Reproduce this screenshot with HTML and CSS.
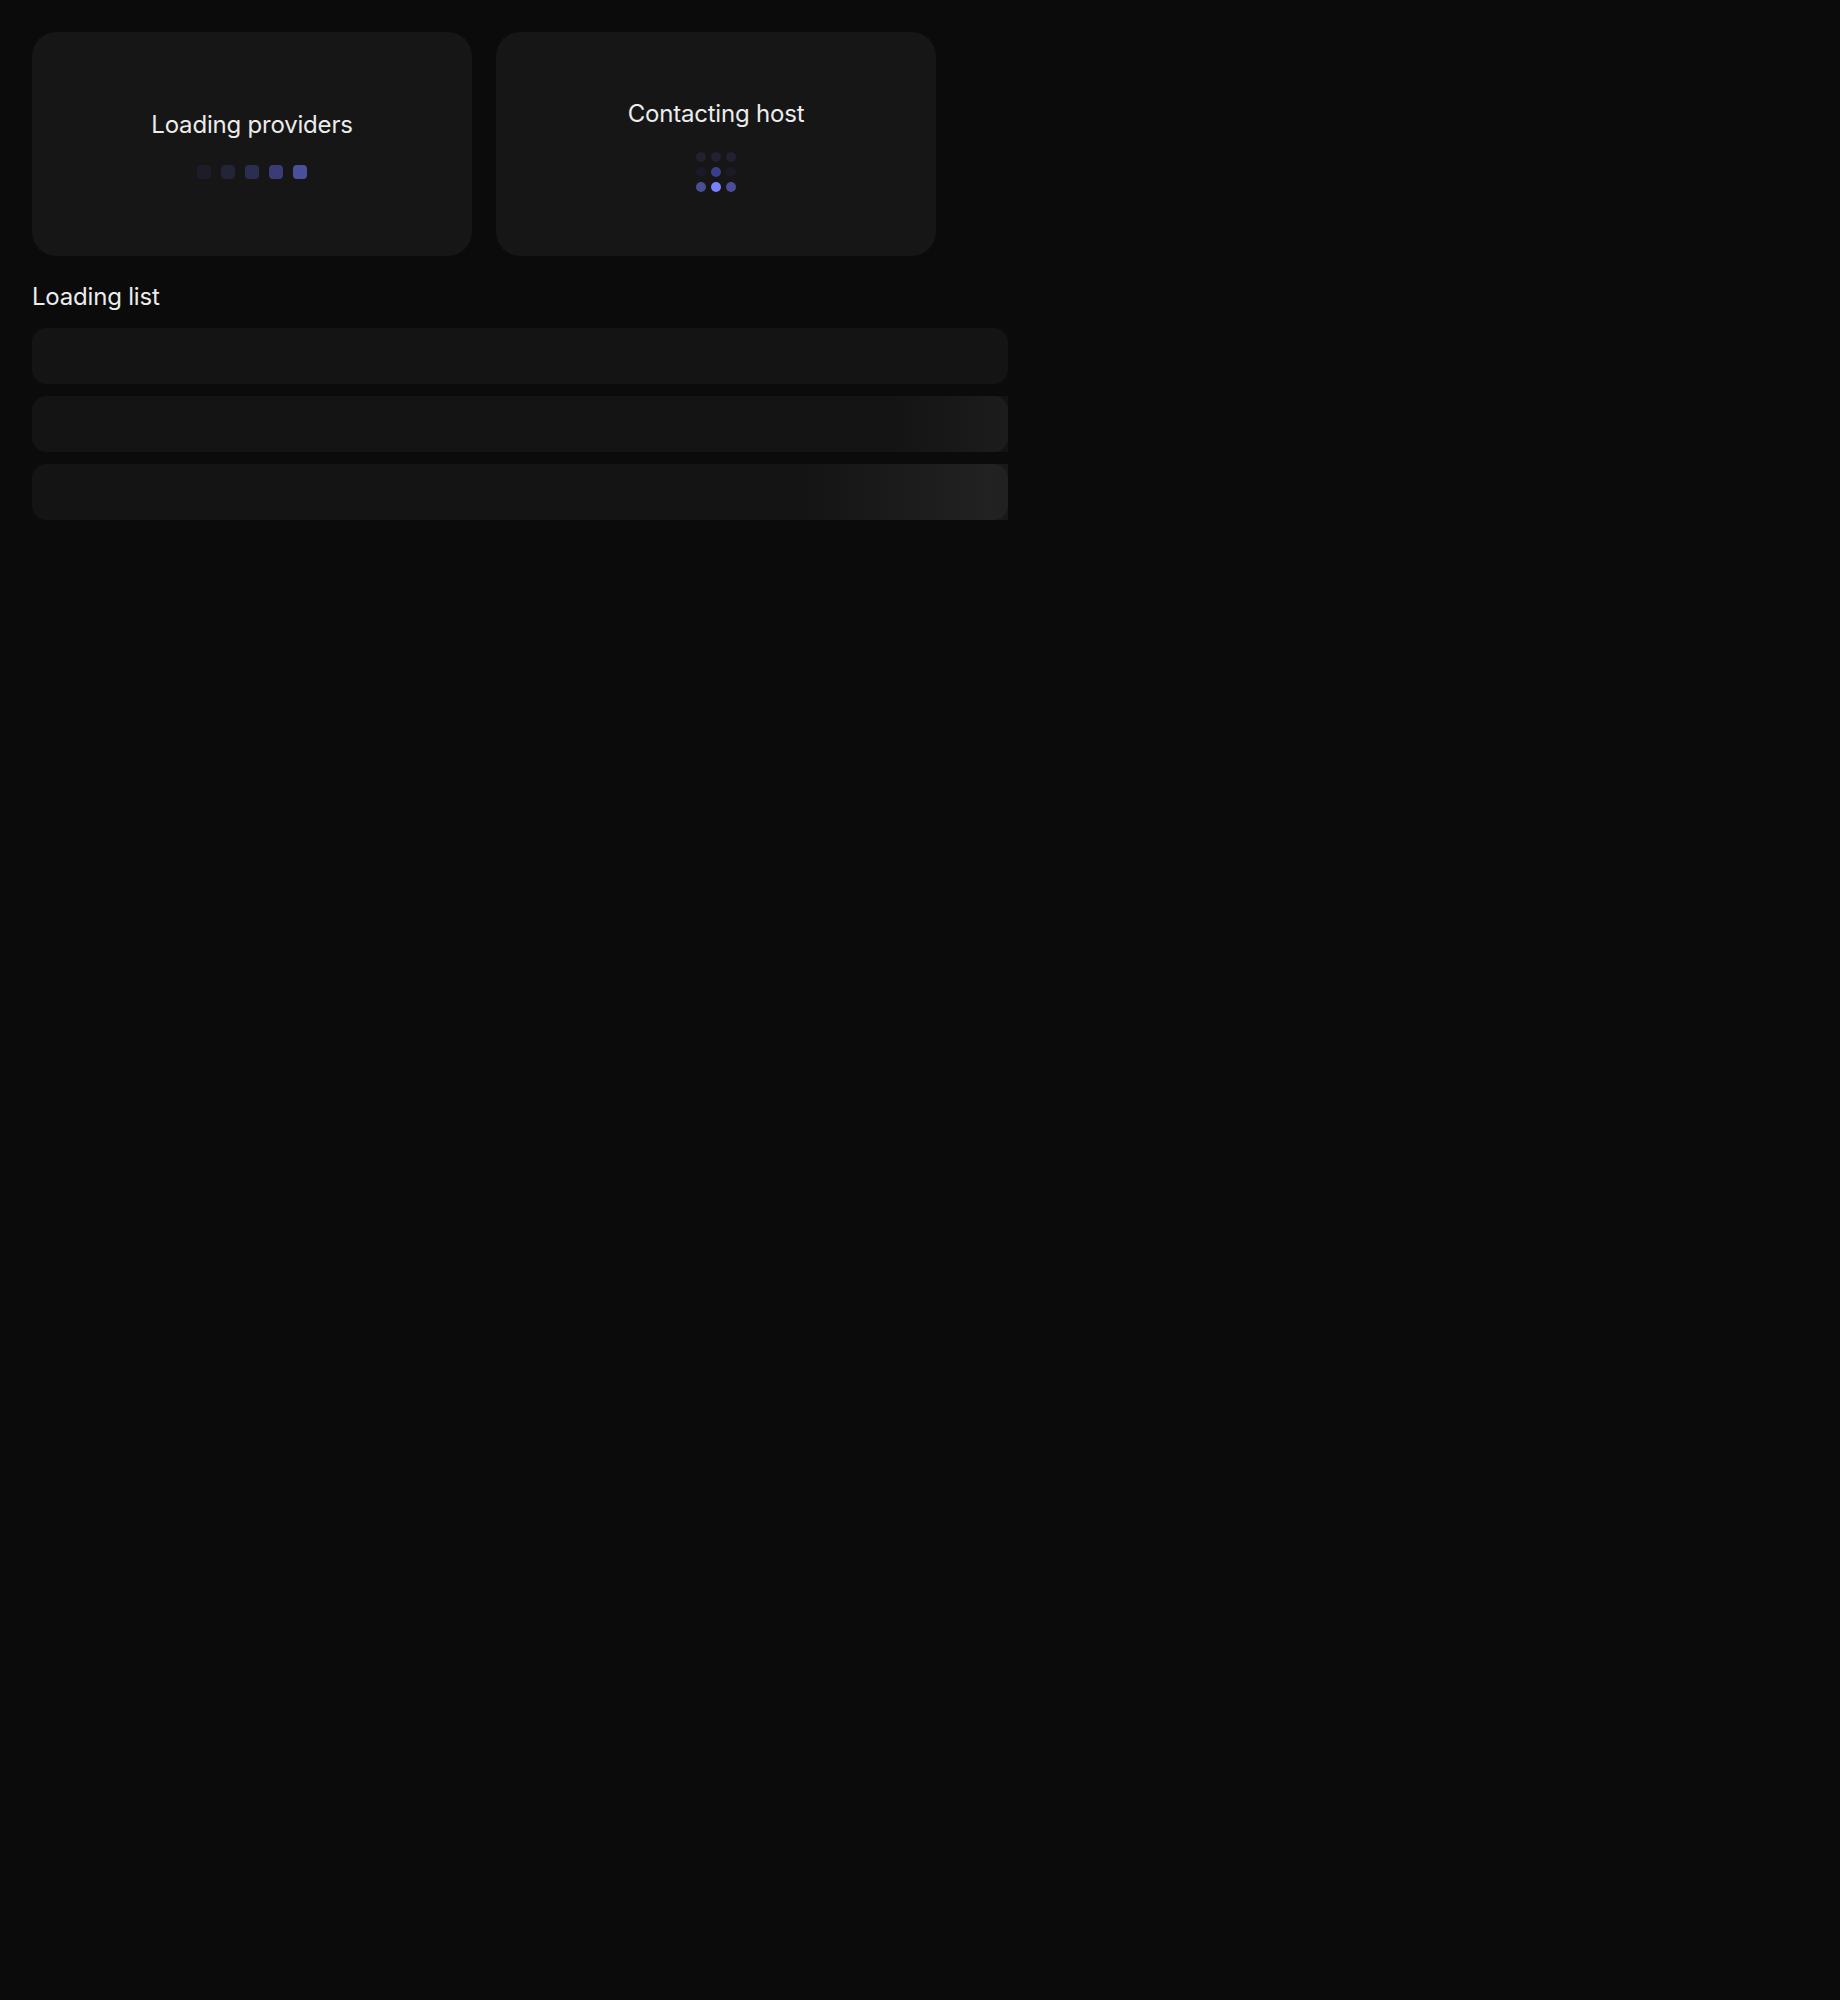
FILE: index.html
```html
<!DOCTYPE html>
<html lang="en">
<head>
<meta charset="utf-8">
<title>Loading states</title>
<link rel="stylesheet" href="styles.css">
</head>
<body>
<main class="page">
  <section class="cards">
    <div class="card">
      <div class="card-body">
        <div class="card-title">Loading providers</div>
        <div class="bars">
          <span class="bar bar-1"></span>
          <span class="bar bar-2"></span>
          <span class="bar bar-3"></span>
          <span class="bar bar-4"></span>
          <span class="bar bar-5"></span>
        </div>
      </div>
    </div>
    <div class="card">
      <div class="card-body card-body-grid">
        <div class="card-title">Contacting host</div>
        <div class="grid">
          <span class="dot d-dim"></span>
          <span class="dot d-dim"></span>
          <span class="dot d-dim"></span>
          <span class="dot d-faint"></span>
          <span class="dot d-mid"></span>
          <span class="dot d-faint"></span>
          <span class="dot d-bright"></span>
          <span class="dot d-peak"></span>
          <span class="dot d-bright"></span>
        </div>
      </div>
    </div>
  </section>
  <h2 class="list-title">Loading list</h2>
  <section class="list">
    <div class="row"></div>
    <div class="row shimmer shimmer-2"></div>
    <div class="row shimmer shimmer-3"></div>
  </section>
</main>
</body>
</html>
```

FILE: styles.css
```css
* { box-sizing: border-box; }

html, body {
  margin: 0;
  padding: 0;
  background: #0b0b0b;
}

body {
  font-family: Inter, "Liberation Sans", sans-serif;
  color: #ececec;
}

.page {
  padding: 32px;
  width: 1040px;
}

.cards {
  display: flex;
  gap: 24px;
}

.card {
  width: 440px;
  height: 224px;
  background: #161616;
  border-radius: 24px;
  display: flex;
  align-items: center;
  justify-content: center;
}

.card-body {
  display: flex;
  flex-direction: column;
  align-items: center;
  gap: 24px;
}

.card-body-grid {
  padding-top: 2px;
  gap: 22px;
}

.card-title {
  font-size: 24px;
  line-height: 32px;
  font-weight: 400;
  letter-spacing: -0.2px;
}

.bars {
  display: flex;
  gap: 10px;
}

.bar {
  width: 14px;
  height: 14px;
  border-radius: 4px;
  display: block;
}
.bar-1 { background: #1d1d29; }
.bar-2 { background: #222438; }
.bar-3 { background: #2c2e51; }
.bar-4 { background: #393c76; }
.bar-5 { background: #4a4f99; }

.grid {
  display: grid;
  grid-template-columns: repeat(3, 10px);
  gap: 5px;
}

.dot {
  width: 10px;
  height: 10px;
  border-radius: 50%;
  display: block;
}
.d-dim { background: #21212f; }
.d-faint { background: #1b1b27; }
.d-mid { background: #3a3e8c; }
.d-bright { background: #4b4e94; }
.d-peak { background: #7983ff; }

.list-title {
  margin: 25px 0 15px;
  font-size: 24px;
  line-height: 32px;
  font-weight: 400;
  letter-spacing: -0.2px;
}

.list {
  display: flex;
  flex-direction: column;
  gap: 12px;
  width: 976px;
}

.row {
  position: relative;
  height: 56px;
  background: #141414;
  border-radius: 14px;
}

.shimmer::after {
  content: "";
  position: absolute;
  inset: 0;
  background-image: linear-gradient(90deg, rgba(255,255,255,0) 0%, rgba(255,255,255,0.06) 50%, rgba(255,255,255,0) 100%);
  background-size: 380px 100%;
  background-repeat: no-repeat;
}

.shimmer-2::after { background-position: 861px 0; }
.shimmer-3::after { background-position: 768px 0; }
```
